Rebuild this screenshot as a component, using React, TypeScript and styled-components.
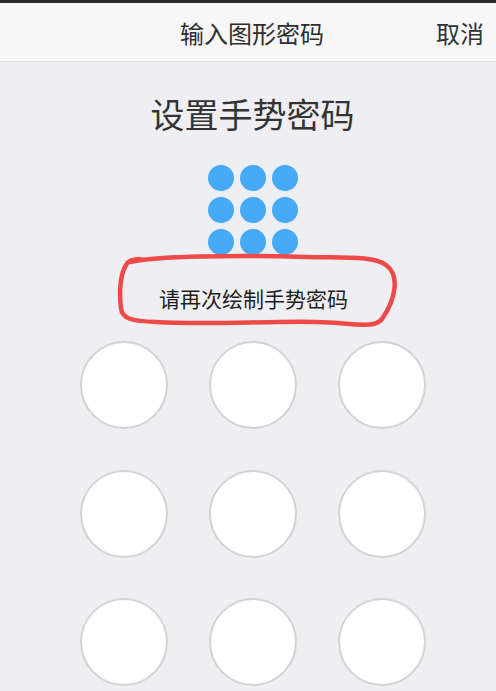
import styled, { createGlobalStyle } from "styled-components";

const GlobalStyle = createGlobalStyle`
  html, body {
    margin: 0;
    padding: 0;
    background: #efeef3;
  }
  body {
    font-family: "Noto Sans CJK SC", "Noto Sans", sans-serif;
  }
`;

const Screen = styled.div`
  width: 496px;
  height: 691px;
  overflow: hidden;
  background: #efeef3;
  display: flex;
  flex-direction: column;
`;

const NavBar = styled.header`
  flex: none;
  height: 56px;
  border-top: 3px solid #2a2a2a;
  border-bottom: 1px solid #dedede;
  background: #f7f7f7;
  display: grid;
  grid-template-columns: 1fr auto 1fr;
  align-items: center;
  padding: 2px 12px 0 20px;
  box-sizing: content-box;
`;

const NavTitle = styled.div`
  grid-column: 2;
  font-size: 24px;
  line-height: 1;
  color: #2e2e2e;
`;

const NavAction = styled.button`
  grid-column: 3;
  justify-self: end;
  border: none;
  background: none;
  padding: 0;
  font-family: inherit;
  font-size: 24px;
  line-height: 1;
  color: #333;
`;

const Main = styled.main`
  flex: 1;
  display: flex;
  flex-direction: column;
  align-items: center;
  padding: 35px 0 0 9px;
`;

const Heading = styled.h1`
  margin: 0;
  font-size: 34px;
  line-height: 1;
  font-weight: 400;
  color: #333;
`;

const Preview = styled.div`
  margin-top: 34px;
  display: grid;
  grid-template-columns: repeat(3, 26px);
  grid-auto-rows: 26px;
  gap: 6px;
`;

const PreviewDot = styled.span`
  border-radius: 50%;
  background: #46a9f6;
`;

const Hint = styled.div`
  position: relative;
  width: 285px;
  height: 76px;
  box-sizing: border-box;
  margin: -2px 0 0 12px;
  padding: 35px 10px 0 0;
  text-align: center;
  font-size: 21px;
  line-height: 20px;
  color: #1e1e1e;
`;

const Scribble = styled.svg`
  position: absolute;
  inset: 0;
  overflow: visible;
  pointer-events: none;
`;

const Pad = styled.div`
  margin-top: 12px;
  display: grid;
  grid-template-columns: repeat(3, 88px);
  grid-auto-rows: 88px;
  column-gap: 41px;
  row-gap: 40.5px;
`;

const Node = styled.div`
  box-sizing: border-box;
  border-radius: 50%;
  border: 2px solid #d3d3d5;
  background: #fff;
`;

const nine = Array.from({ length: 9 }, (_, i) => i);

export default function App() {
  return (
    <>
      <GlobalStyle />
      <Screen>
        <NavBar>
          <NavTitle>输入图形密码</NavTitle>
          <NavAction>取消</NavAction>
        </NavBar>

        <Main>
          <Heading>设置手势密码</Heading>

          <Preview>
            {nine.map((i) => (
              <PreviewDot key={i} />
            ))}
          </Preview>

          <Hint>
            请再次绘制手势密码
            <Scribble width="285" height="76" viewBox="0 0 285 76">
              <path
                d="M14 9 C40 3, 120 2, 190 4 C230 5, 258 3, 270 12 C284 22, 280 46, 266 66 C258 76, 240 70, 200 69 C150 68, 90 72, 40 69 C16 68, 6 66, 5 55 C3 40, 4 22, 10 12 C12 8, 16 6, 24 6"
                fill="none"
                stroke="#ee4a47"
                strokeWidth="4.5"
                strokeLinecap="round"
                strokeLinejoin="round"
              />
            </Scribble>
          </Hint>

          <Pad>
            {nine.map((i) => (
              <Node key={i} />
            ))}
          </Pad>
        </Main>
      </Screen>
    </>
  );
}
